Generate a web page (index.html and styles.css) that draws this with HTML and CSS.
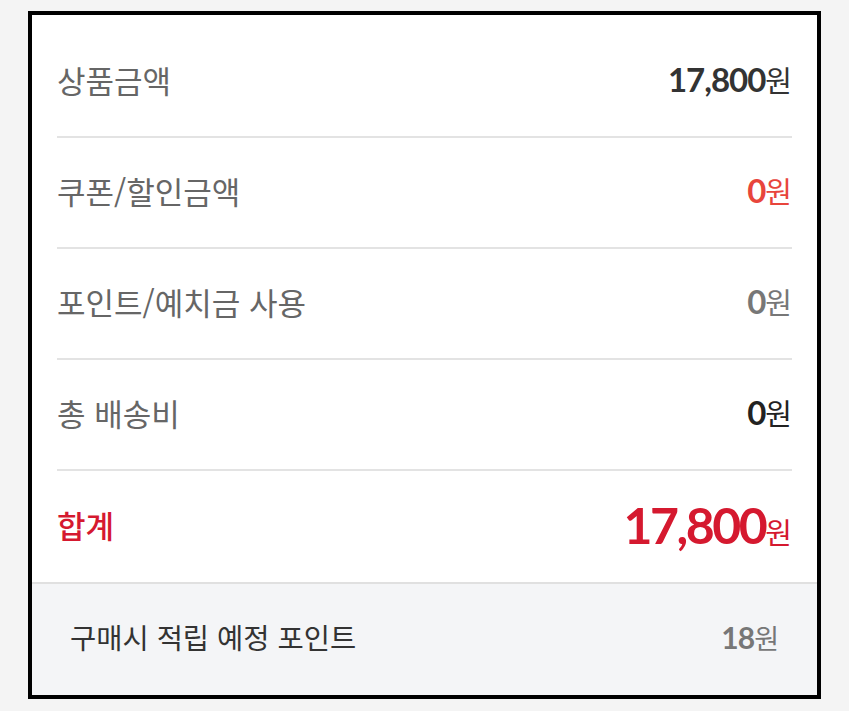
FILE: index.html
```html
<!DOCTYPE html>
<html lang="ko">
<head>
<meta charset="utf-8">
<link rel="stylesheet" href="styles.css">
</head>
<body>
<div class="card">
  <div class="list">
    <div class="row">
      <span class="label">상품금액</span>
      <span class="value v-dark"><b class="num">17,800</b><span class="won">원</span></span>
    </div>
    <div class="row">
      <span class="label">쿠폰/할인금액</span>
      <span class="value v-red"><b class="num">0</b><span class="won">원</span></span>
    </div>
    <div class="row">
      <span class="label">포인트/예치금 사용</span>
      <span class="value v-gray"><b class="num">0</b><span class="won">원</span></span>
    </div>
    <div class="row">
      <span class="label">총 배송비</span>
      <span class="value v-black"><b class="num">0</b><span class="won">원</span></span>
    </div>
    <div class="row row-total">
      <span class="label label-total">합계</span>
      <span class="value v-total"><b class="num num-total">17,800</b><span class="won">원</span></span>
    </div>
  </div>
  <div class="footer">
    <span class="footer-label">구매시 적립 예정 포인트</span>
    <span class="value v-foot"><b class="num num-foot">18</b><span class="won won-foot">원</span></span>
  </div>
</div>
</body>
</html>
```
FILE: styles.css
```css
html, body {
  margin: 0;
  padding: 0;
  background: #f4f4f4;
}
body {
  font-family: "Noto Sans CJK KR", "Noto Sans", sans-serif;
}
.card {
  margin: 11px 0 0 28px;
  width: 785px;
  border: 4px solid #000;
  background: #fff;
}
.list {
  padding: 12px 25px 0;
}
.row {
  box-sizing: border-box;
  display: flex;
  justify-content: space-between;
  align-items: center;
  height: 111px;
  padding-bottom: 4px;
  border-bottom: 2px solid #e3e3e3;
}
.row-total {
  border-bottom: none;
}
.label {
  font-size: 31px;
  color: #666;
  line-height: 1;
}
.label-total {
  color: #d5192f;
  font-weight: 500;
}
.value {
  display: flex;
  align-items: baseline;
  line-height: 1;
}
.num {
  font-family: Lato, "Liberation Sans", sans-serif;
  font-weight: 700;
  font-size: 33px;
  letter-spacing: -1px;
}
.won {
  font-size: 29px;
  font-weight: 400;
}
.v-dark { color: #333; }
.v-red { color: #e8453c; }
.v-gray { color: #777; }
.v-black { color: #222; }
.v-total { color: #d5192f; }
.num-total {
  font-size: 50px;
  letter-spacing: -2.5px;
}
.footer {
  box-sizing: border-box;
  display: flex;
  justify-content: space-between;
  align-items: center;
  height: 113px;
  padding: 0 38px 5px;
  background: #f4f5f7;
  border-top: 2px solid #e0e0e0;
}
.footer-label {
  font-size: 28.5px;
  color: #333;
  line-height: 1;
}
.v-foot { color: #777; }
.num-foot {
  font-size: 30px;
}
.won-foot {
  font-size: 27px;
}
```
